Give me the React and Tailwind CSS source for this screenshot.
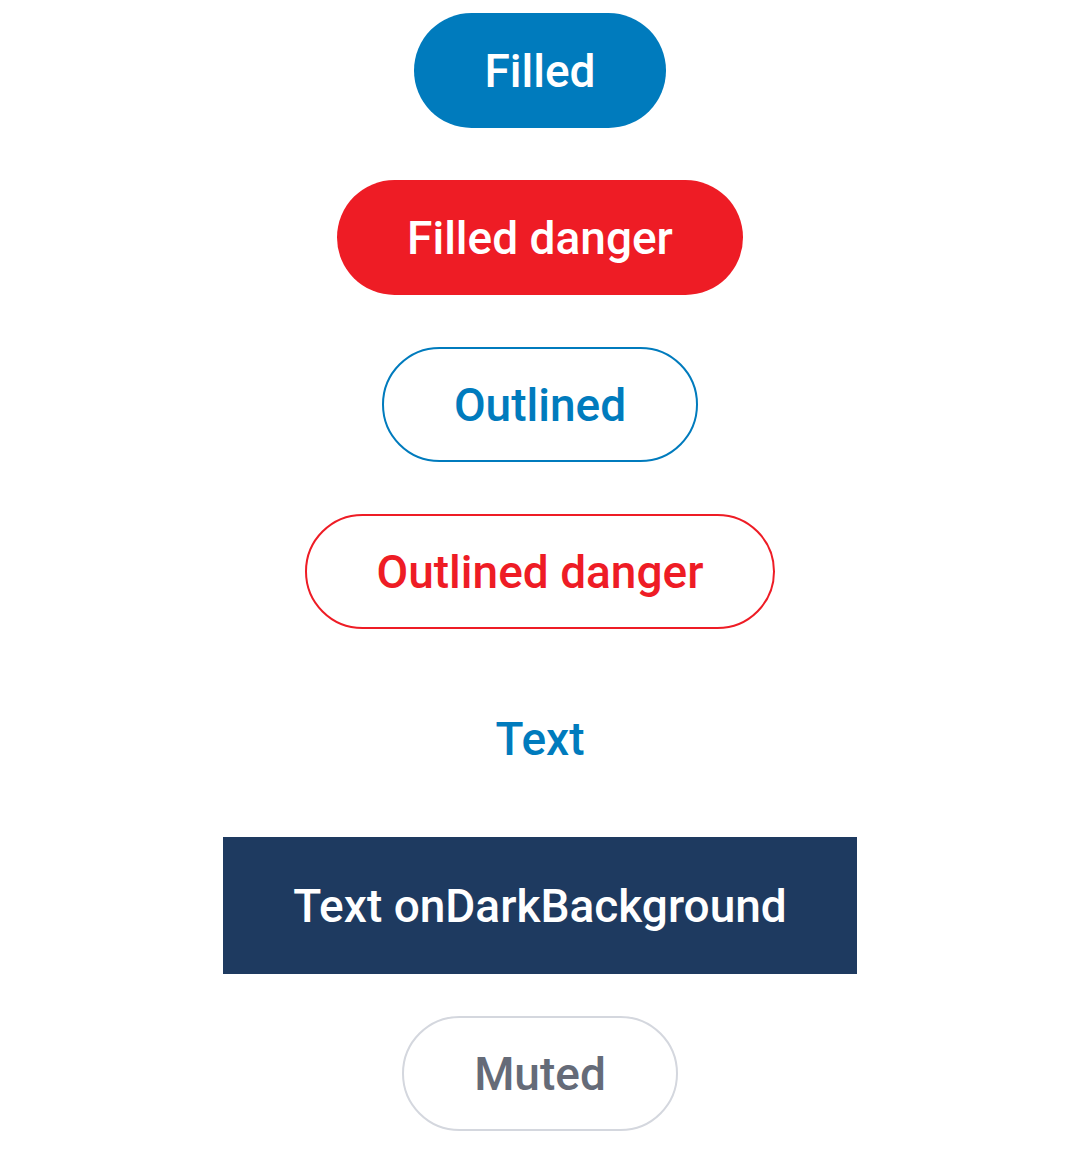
const base =
  'h-[115px] px-[70px] rounded-[57.5px] flex items-center justify-center text-[46px] font-medium leading-none whitespace-nowrap'

function Btn({ className, children }) {
  return <button className={`${base} ${className}`}>{children}</button>
}

export default function App() {
  return (
    <div
      className="min-h-[1153px] bg-white flex flex-col items-center pt-[13px]"
      style={{ fontFamily: 'Roboto, "Noto Sans", sans-serif' }}
    >
      <div className="flex flex-col items-center gap-[52px]">
        <Btn className="bg-[#007bbd] text-white">Filled</Btn>
        <Btn className="bg-[#ee1c25] text-white">Filled danger</Btn>
        <Btn className="border-[2.5px] border-[#007bbd] text-[#007bbd] bg-white">Outlined</Btn>
        <Btn className="border-[2.5px] border-[#ee1c25] text-[#ee1c25] bg-white">Outlined danger</Btn>
        <Btn className="text-[#007bbd]">Text</Btn>
      </div>
      <div className="mt-[41px] bg-[#1e3a60] py-[11px]">
        <Btn className="text-white">Text onDarkBackground</Btn>
      </div>
      <div className="mt-[42px]">
        <Btn className="border-[2.5px] border-[#d4d7de] text-[#656b78] bg-white">Muted</Btn>
      </div>
    </div>
  )
}
